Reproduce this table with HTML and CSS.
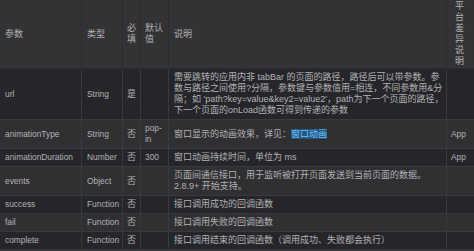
FILE: index.html
```html
<!DOCTYPE html>
<html lang="zh">
<head>
<meta charset="utf-8">
<title>navigateTo 参数</title>
<link rel="stylesheet" href="styles.css">
</head>
<body>
<table class="params">
  <colgroup>
    <col class="c-name">
    <col class="c-type">
    <col class="c-req">
    <col class="c-def">
    <col class="c-desc">
    <col class="c-plat">
  </colgroup>
  <thead>
    <tr>
      <th>参数</th>
      <th>类型</th>
      <th>必填</th>
      <th>默认值</th>
      <th>说明</th>
      <th>平台差异说明</th>
    </tr>
  </thead>
  <tbody>
    <tr>
      <td>url</td>
      <td>String</td>
      <td>是</td>
      <td></td>
      <td>需要跳转的应用内非 tabBar 的页面的路径，路径后可以带参数。参数与路径之间使用?分隔，参数键与参数值用=相连，不同参数用&amp;分隔；如 'path?key=value&amp;key2=value2'，path为下一个页面的路径，下一个页面的onLoad函数可得到传递的参数</td>
      <td></td>
    </tr>
    <tr>
      <td>animationType</td>
      <td>String</td>
      <td>否</td>
      <td>pop-in</td>
      <td>窗口显示的动画效果，详见：<a class="link" href="#">窗口动画</a></td>
      <td>App</td>
    </tr>
    <tr>
      <td>animationDuration</td>
      <td>Number</td>
      <td>否</td>
      <td>300</td>
      <td>窗口动画持续时间，单位为 ms</td>
      <td>App</td>
    </tr>
    <tr>
      <td>events</td>
      <td>Object</td>
      <td>否</td>
      <td></td>
      <td>页面间通信接口，用于监听被打开页面发送到当前页面的数据。2.8.9+ 开始支持。</td>
      <td></td>
    </tr>
    <tr>
      <td>success</td>
      <td>Function</td>
      <td>否</td>
      <td></td>
      <td>接口调用成功的回调函数</td>
      <td></td>
    </tr>
    <tr>
      <td>fail</td>
      <td>Function</td>
      <td>否</td>
      <td></td>
      <td>接口调用失败的回调函数</td>
      <td></td>
    </tr>
    <tr>
      <td>complete</td>
      <td>Function</td>
      <td>否</td>
      <td></td>
      <td>接口调用结束的回调函数（调用成功、失败都会执行）</td>
      <td></td>
    </tr>
  </tbody>
</table>
</body>
</html>
```
FILE: styles.css
```css
html, body {
  margin: 0;
  padding: 0;
  background: #343436;
}

body {
  font-family: "Liberation Sans", "Noto Sans CJK SC", sans-serif;
  font-size: 9px;
  color: #b2b2b4;
}

.params {
  width: 475px;
  border-collapse: collapse;
  table-layout: fixed;
  margin-left: -1px;
}

.c-name { width: 82px; }
.c-type { width: 41px; }
.c-req  { width: 18px; }
.c-def  { width: 28px; }
.c-desc { width: 278px; }
.c-plat { width: 28px; }

.params th,
.params td {
  border: 1px solid #3a3a3c;
  padding: 3px 2px 3px 5px;
  line-height: 11px;
  text-align: left;
  vertical-align: middle;
  word-wrap: break-word;
}

.params td:nth-child(1),
.params td:nth-child(2),
.params td:nth-child(4),
.params td:nth-child(6) {
  font-size: 8.4px;
}

.params td:nth-child(1),
.params td:nth-child(2) {
  white-space: nowrap;
}

.params th {
  font-weight: normal;
  background: #333335;
  height: 65px;
  padding-top: 1px;
  padding-bottom: 1px;
  border-top: none;
  border-color: #2c2c2e;
}

.params tbody tr:nth-child(odd) td {
  background: #26262a;
}

.params tbody tr:nth-child(even) td {
  background: #303032;
}

.params td:nth-child(3),
.params td:nth-child(4),
.params th:nth-child(3),
.params th:nth-child(4) {
  padding-left: 4px;
  padding-right: 2px;
}

.params th:last-child {
  padding-left: 8px;
  padding-right: 3px;
}

.params td:last-child {
  padding-left: 4px;
}

.link {
  color: #7cc0f5;
  background: #1f5784;
  text-decoration: none;
}
```
